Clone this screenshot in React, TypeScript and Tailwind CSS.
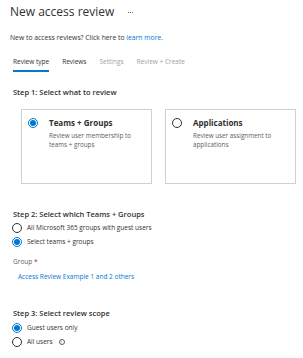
import React from 'react';

function Radio({ checked, size = 9 }: { checked?: boolean; size?: number }) {
  return (
    <span
      className={`inline-flex shrink-0 items-center justify-center rounded-full border ${checked ? 'border-[#0078d4]' : 'border-[#323130]'}`}
      style={{ width: size, height: size }}
    >
      {checked && <span className="rounded-full bg-[#0078d4]" style={{ width: size - 4, height: size - 4 }} />}
    </span>
  );
}

function TypeCard({ title, desc, checked }: { title: string; desc: string; checked?: boolean }) {
  return (
    <div className="flex h-[75px] w-[131px] items-start border border-[#d2d0ce] pl-[6px] pt-[7px]">
      <div className="flex pt-[1px]">
        <Radio checked={checked} size={10} />
      </div>
      <div className="pl-[11px]">
        <div className="text-[8px] font-bold leading-[12px] text-[#323130]">{title}</div>
        <div className="mt-[2px] w-[90px] text-[6.3px] leading-[9px] text-[#605e5c]">{desc}</div>
      </div>
    </div>
  );
}

function Option({ label, checked, info }: { label: string; checked?: boolean; info?: boolean }) {
  return (
    <div className="flex h-[14px] items-center gap-[5px]">
      <Radio checked={checked} size={10} />
      <span className="text-[6.5px] text-[#323130]">{label}</span>
      {info && (
        <span className="ml-[1px] inline-flex h-[6px] w-[6px] items-center justify-center rounded-full border border-[#605e5c] text-[4px] leading-none text-[#605e5c]">
          i
        </span>
      )}
    </div>
  );
}

export default function App() {
  return (
    <div className="h-[358px] w-[303px] bg-white font-['Open_Sans',sans-serif] text-[#323130]">
      <div className="flex items-center px-[10px] pt-[3px]">
        <h1 className="text-[12px] leading-[18px]">New access review</h1>
        <span className="ml-[14px] flex gap-[1px]">
          <span className="h-[1px] w-[1px] bg-[#605e5c]" />
          <span className="h-[1px] w-[1px] bg-[#605e5c]" />
          <span className="h-[1px] w-[1px] bg-[#605e5c]" />
        </span>
      </div>
      <p className="mt-[12px] px-[10px] text-[6.8px] leading-[9px] text-[#323130]">
        New to access reviews? Click here to <span className="text-[#0078d4]">learn more.</span>
      </p>

      <div className="mt-[15px] flex gap-[13px] px-[13px] text-[6.5px]">
        <div className="flex flex-col">
          <span className="leading-[10px]">Review type</span>
          <span className="mt-[3px] h-[2px] bg-[#0078d4]" />
        </div>
        <span className="leading-[10px] text-[#323130]">Reviews</span>
        <span className="leading-[10px] text-[#a19f9d]">Settings</span>
        <span className="leading-[10px] text-[#a19f9d]">Review + Create</span>
      </div>

      <div className="mt-[15px] px-[13px] text-[7.5px] font-semibold leading-[11px]">Step 1: Select what to review</div>
      <div className="mt-[11px] flex gap-[13px] pl-[21px]">
        <TypeCard title="Teams + Groups" desc="Review user membership to teams + groups" checked />
        <TypeCard title="Applications" desc="Review user assignment to applications" />
      </div>

      <div className="mt-[25px] px-[13px] text-[7.5px] font-semibold leading-[11px]">Step 2: Select which Teams + Groups</div>
      <div className="mt-[1px] flex flex-col px-[12px]">
        <Option label="All Microsoft 365 groups with guest users" />
        <Option label="Select teams + groups" checked />
      </div>
      <div className="mt-[8px] px-[13px] text-[6.5px] leading-[9px] text-[#605e5c]">
        Group <span className="text-[#a4262c]">*</span>
      </div>
      <div className="mt-[6px] px-[18px] text-[6.5px] leading-[9px] text-[#0078d4]">Access Review Example 1 and 2 others</div>

      <div className="mt-[27px] px-[13px] text-[7.5px] font-semibold leading-[11px]">Step 3: Select review scope</div>
      <div className="mt-[2px] flex flex-col px-[12px]">
        <Option label="Guest users only" checked />
        <Option label="All users" info />
      </div>
    </div>
  );
}
